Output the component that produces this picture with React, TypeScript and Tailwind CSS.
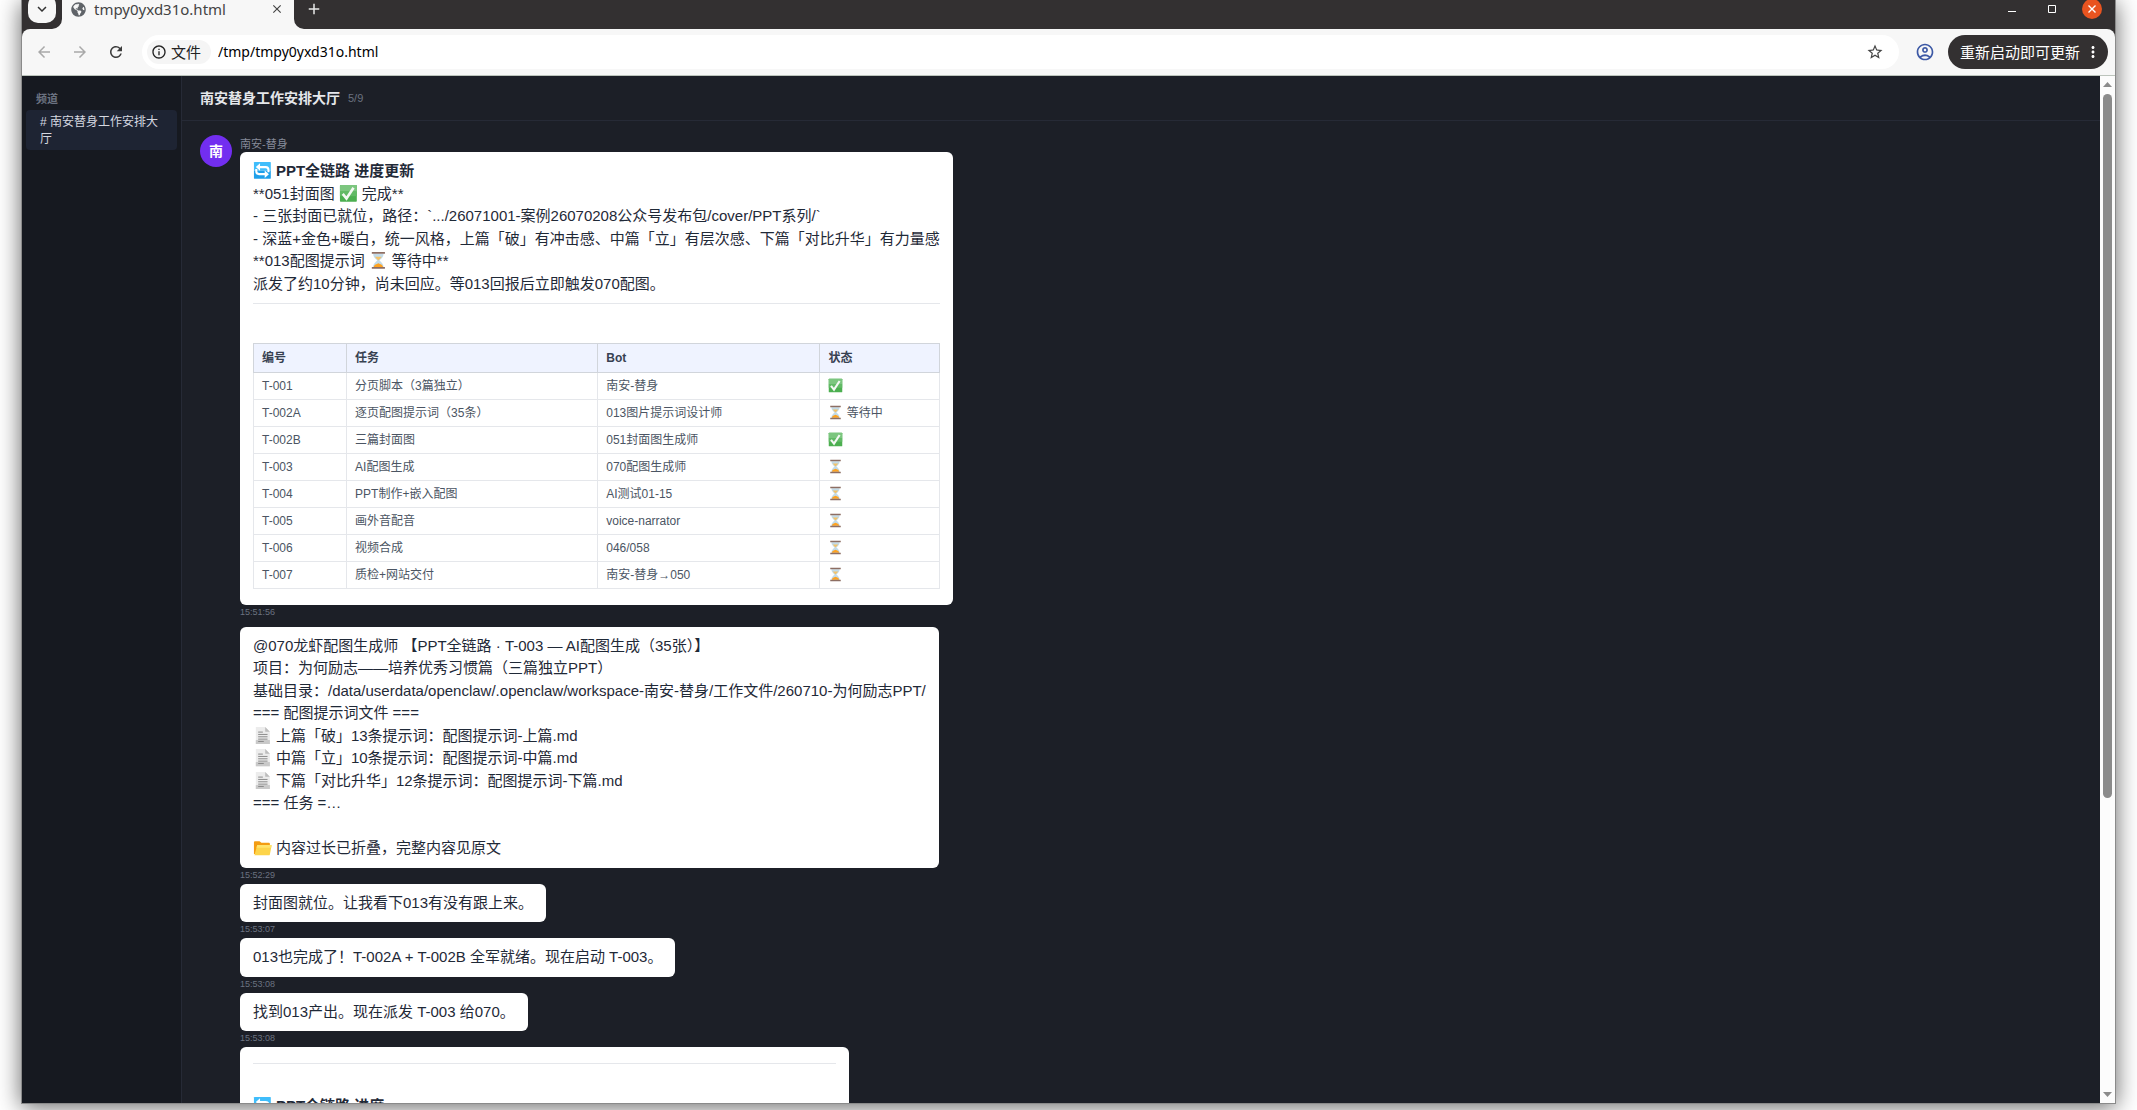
import { ReactNode } from 'react';
import { FaGlobeAmericas } from 'react-icons/fa';
import {
    MdAdd,
    MdArrowBack,
    MdArrowForward,
    MdClose,
    MdExpandMore,
    MdInfoOutline,
    MdMoreVert,
    MdOutlineAccountCircle,
    MdRefresh,
    MdStarBorder,
} from 'react-icons/md';

interface Task {
    id: string;
    name: string;
    bot: string;
    status: string;
}

interface BubbleProps {
    time?: string;
    last?: boolean;
    className?: string;
    children: ReactNode;
}

const tasks: Task[] = [
    { id: 'T-001', name: '分页脚本（3篇独立）', bot: '南安-替身', status: '✅' },
    { id: 'T-002A', name: '逐页配图提示词（35条）', bot: '013图片提示词设计师', status: '⏳ 等待中' },
    { id: 'T-002B', name: '三篇封面图', bot: '051封面图生成师', status: '✅' },
    { id: 'T-003', name: 'AI配图生成', bot: '070配图生成师', status: '⏳' },
    { id: 'T-004', name: 'PPT制作+嵌入配图', bot: 'AI测试01-15', status: '⏳' },
    { id: 'T-005', name: '画外音配音', bot: 'voice-narrator', status: '⏳' },
    { id: 'T-006', name: '视频合成', bot: '046/058', status: '⏳' },
    { id: 'T-007', name: '质检+网站交付', bot: '南安-替身→050', status: '⏳' },
];

const dispatchLines = [
    '@070龙虾配图生成师 【PPT全链路 · T-003 — AI配图生成（35张）】',
    '项目：为何励志——培养优秀习惯篇（三篇独立PPT）',
    '基础目录：/data/userdata/openclaw/.openclaw/workspace-南安-替身/工作文件/260710-为何励志PPT/',
    '=== 配图提示词文件 ===',
    '📄 上篇「破」13条提示词：配图提示词-上篇.md',
    '📄 中篇「立」10条提示词：配图提示词-中篇.md',
    '📄 下篇「对比升华」12条提示词：配图提示词-下篇.md',
    '=== 任务 =…',
    '',
    '📂 内容过长已折叠，完整内容见原文',
];

const emojiArt: Record<string, ReactNode> = {
    '🔄': (
        <>
            <path fill="#3fbdfb" d="M1.5 1h17q.5 0 .5.5V10H1V1.500q0-.5.5-.5z" />
            <path fill="#1fa0ea" d="M1 10h18v8.500q0 .5-.5.500h-17q-.5 0-.5-.500z" />
            <path fill="none" stroke="#fff" strokeWidth="2.200" d="M6 6.500h7.500q3 0 3 3V12M14 14H6.500q-3 0-3-3V8.500" />
            <path fill="#fff" d="M3 6.500L7.500 2.500v8zM17 14l-4.500-4v8z" />
        </>
    ),
    '✅': (
        <>
            <rect x="1" y="1" width="18" height="18" rx=".8" fill="#4caf50" />
            <path fill="#7cc67f" d="M1.800 1h16.400q.8 0 .8.800V8H1V1.800q0-.8.800-.8z" />
            <path fill="#62ba66" d="M1 8h18v5H1z" />
            <path fill="none" stroke="#f4f8f4" strokeWidth="2.800" d="M4 10.500l4 5L15.500 4" />
        </>
    ),
    '⏳': (
        <>
            <path fill="#c3dbe8" d="M4.500 3h11c0 4-3 5.500-4.300 7 1.300 1.500 4.300 3 4.300 7h-11c0-4 3-5.500 4.300-7C7.500 8.500 4.500 7 4.500 3z" />
            <path fill="#f4c36a" d="M6.500 6h7c-.6 1.500-2.500 2.500-3.500 4-1-1.500-2.900-2.500-3.500-4z" />
            <path fill="#ffa21f" d="M5 17c.5-2.500 3-3 5-4 2 1 4.500 1.500 5 4z" />
            <path fill="#8d6e63" d="M3 1h14v2H3zM3 17h14v2H3z" />
        </>
    ),
    '📄': (
        <>
            <path fill="#ececec" d="M3 1h10l5 5v13.500H3z" />
            <path fill="#c9c9c9" d="M3 15h15v4.500H3z" />
            <path fill="#bdbdbd" d="M13 1l5 5h-5z" />
            <path fill="none" stroke="#858585" d="M5.500 6.500h5M5.500 9h10M5.500 11.500h10M5.500 14h10M5.500 16.500h6" />
        </>
    ),
    '📂': (
        <>
            <path fill="#f39c12" d="M1 4.500q0-1 1-1h5l2 1.500h8q1 0 1 1V17H1z" />
            <path fill="#fdd44a" d="M4.500 7.500h14.700q.8 0 .6.800L18 17.500q-.2 1-1.200 1H1.500z" />
            <path fill="#ffe36b" d="M4.500 7.500h14.700q.8 0 .6.800l-.5 2H3.700z" />
        </>
    ),
};

// Splits the emoji out of a line and draws them as icons
function RichText({ text }: { text: string }) {
    return (
        <>
            {text.split(/(🔄|✅|⏳|📄|📂)/u).map((part, index) =>
                emojiArt[part] ? (
                    <svg
                        key={index}
                        role="img"
                        aria-label={part}
                        viewBox="0 0 20 20"
                        className="inline-block size-[1.25em] align-[-0.25em]"
                    >
                        {emojiArt[part]}
                    </svg>
                ) : (
                    part
                ),
            )}
        </>
    );
}

function TabStrip() {
    return (
        <div className="-mt-[11px] flex h-10 shrink-0 items-center bg-[#333031] pl-1.5 pr-[13px]">
            <button aria-label="搜索标签页" className="flex size-7 items-center justify-center rounded-[10px] bg-[#f7f7f7] text-[#333]">
                <MdExpandMore size={18} />
            </button>

            {/* Active tab */}
            <div className="relative ml-1.5 flex h-full w-[232px] items-center rounded-t-[10px] bg-[#f7f7f7] pl-[9px] pr-2.5 text-[#444]">
                <svg className="absolute -left-2.5 bottom-0 size-2.5 text-[#f7f7f7]" viewBox="0 0 10 10" fill="currentColor">
                    <path d="M10 0v10H0A10 10 0 0 0 10 0z" />
                </svg>
                <svg className="absolute -right-2.5 bottom-0 size-2.5 text-[#f7f7f7]" viewBox="0 0 10 10" fill="currentColor">
                    <path d="M0 0v10h10A10 10 0 0 1 0 0z" />
                </svg>
                <FaGlobeAmericas size={15} className="text-[#5f6368]" />
                <span className="ml-2 flex-1 text-[15px]">tmpy0yxd31o.html</span>
                <button aria-label="关闭标签页">
                    <MdClose size={14} />
                </button>
            </div>

            <button aria-label="新标签页" className="ml-[11px] text-[#e8e8e8]">
                <MdAdd size={18} />
            </button>

            {/* Window controls */}
            <div className="ml-auto flex items-center text-white">
                <button aria-label="最小化" className="flex size-5 items-center justify-center">
                    <svg width="8" height="8" viewBox="0 0 8 8" fill="currentColor">
                        <path d="M0 6h8v1H0z" />
                    </svg>
                </button>
                <button aria-label="最大化" className="ml-5 flex size-5 items-center justify-center">
                    <svg width="8" height="8" viewBox="0 0 8 8" fill="none" stroke="currentColor">
                        <path d="M.5.5h7v7h-7z" />
                    </svg>
                </button>
                <button aria-label="关闭" className="ml-5 flex size-5 items-center justify-center rounded-full bg-[#e95420]">
                    <svg width="8" height="8" viewBox="0 0 8 8" fill="none" stroke="currentColor" strokeWidth="1.4">
                        <path d="M.5.5l7 7M7.5.5l-7 7" />
                    </svg>
                </button>
            </div>
        </div>
    );
}

function Toolbar() {
    return (
        <div className="bg-[#333031]">
            <div className="flex h-[47px] items-center rounded-t-lg border-b border-[#bcc4bc] bg-[#f7f7f7] pl-[13px] pr-[7px]">
                <button aria-label="后退" className="text-[#a9a9a9]">
                    <MdArrowBack size={18} />
                </button>
                <button aria-label="前进" className="ml-[18px] text-[#a9a9a9]">
                    <MdArrowForward size={18} />
                </button>
                <button aria-label="重新加载" className="ml-[18px] text-[#3c3c3c]">
                    <MdRefresh size={18} />
                </button>

                {/* Address bar */}
                <div className="ml-[17px] flex h-[34px] flex-1 items-center rounded-full bg-white pl-[5px] pr-[15px]">
                    <button className="flex h-6 items-center gap-1 rounded-full bg-[#f5f5f5] pl-1 pr-2.5 text-[15px] text-[#222]">
                        <MdInfoOutline size={16} />
                        文件
                    </button>
                    <input
                        aria-label="地址"
                        className="ml-[7px] flex-1 bg-transparent text-sm text-black outline-none"
                        defaultValue="/tmp/tmpy0yxd31o.html"
                    />
                    <button aria-label="收藏" className="text-[#444]">
                        <MdStarBorder size={18} />
                    </button>
                </div>

                <button aria-label="用户" className="ml-4 text-[#3c58a5]">
                    <MdOutlineAccountCircle size={20} />
                </button>
                <button className="ml-[13px] flex h-[34px] items-center gap-1 rounded-full bg-[#333031] pl-3 pr-1.5 text-[15px] text-white">
                    重新启动即可更新
                    <MdMoreVert size={18} />
                </button>
            </div>
        </div>
    );
}

function Sidebar() {
    return (
        <nav className="w-40 shrink-0 border-r border-[#262a36] bg-[#161920] pt-3.5">
            <h2 className="px-3.5 pb-0.5 text-[11px] leading-[18px] font-bold text-[#6b7280]">频道</h2>
            <a href="#hall" className="mx-1 block rounded-sm bg-[#1e2433] px-3.5 pt-1 pb-0.5 text-xs leading-[17px] text-[#d5d8e0]">
                # 南安替身工作安排大厅
            </a>
        </nav>
    );
}

function Bubble({ time, last, className, children }: BubbleProps) {
    return (
        <div className={last ? 'mb-1.5' : ''}>
            <div className={`w-fit rounded-md bg-white px-[13px] py-2 text-[15px] leading-normal text-[#1f2937] ${className ?? ''}`}>
                {children}
            </div>
            {time && <time className="block h-4 text-[9px] leading-[14px] text-[#6b7280]">{time}</time>}
        </div>
    );
}

function TaskTable() {
    return (
        <table className="my-2 w-full border-collapse text-left text-xs leading-normal">
            <thead>
                <tr className="bg-[#eff3ff] text-[#374151]">
                    {['编号', '任务', 'Bot', '状态'].map((title) => (
                        <th key={title} className="border border-[#d1d5db] px-2 py-[5px] font-bold">
                            {title}
                        </th>
                    ))}
                </tr>
            </thead>
            <tbody className="text-[#4b5563]">
                {tasks.map((task) => (
                    <tr key={task.id}>
                        <td className="border border-gray-200 px-2 py-1">{task.id}</td>
                        <td className="border border-gray-200 px-2 py-1">{task.name}</td>
                        <td className="border border-gray-200 px-2 py-1">{task.bot}</td>
                        <td className="border border-gray-200 px-2 py-1">
                            <RichText text={task.status} />
                        </td>
                    </tr>
                ))}
            </tbody>
        </table>
    );
}

function Messages() {
    return (
        <div className="flex min-h-0 flex-1 gap-2 overflow-hidden px-[18px] pt-3.5">
            <div className="flex size-8 shrink-0 items-center justify-center rounded-full bg-[#722ef0] text-sm font-bold text-white">
                南
            </div>
            <div className="min-w-0 flex-1">
                <div className="pt-px text-[11px] leading-4 text-[#858a98]">南安-替身</div>

                <Bubble time="15:51:56" last>
                    <p className="font-bold">
                        <RichText text="🔄 PPT全链路 进度更新" />
                    </p>
                    <p>
                        <RichText text="**051封面图 ✅ 完成**" />
                    </p>
                    <p>- 三张封面已就位，路径：`.../26071001-案例26070208公众号发布包/cover/PPT系列/`</p>
                    <p>- 深蓝+金色+暖白，统一风格，上篇「破」有冲击感、中篇「立」有层次感、下篇「对比升华」有力量感</p>
                    <p>
                        <RichText text="**013配图提示词 ⏳ 等待中**" />
                    </p>
                    <p>派发了约10分钟，尚未回应。等013回报后立即触发070配图。</p>
                    <hr className="my-2 border-gray-200" />
                    <br />
                    <TaskTable />
                </Bubble>

                <Bubble time="15:52:29" className="whitespace-pre-line">
                    <RichText text={dispatchLines.join('\n')} />
                </Bubble>
                <Bubble time="15:53:07">封面图就位。让我看下013有没有跟上来。</Bubble>
                <Bubble time="15:53:08">013也完成了！T-002A + T-002B 全军就绪。现在启动 T-003。</Bubble>
                <Bubble time="15:53:08">找到013产出。现在派发 T-003 给070。</Bubble>
                <Bubble className="min-w-[609px]">
                    <hr className="my-2 border-gray-200" />
                    <br />
                    <p className="font-bold">
                        <RichText text="🔄 PPT全链路 进度" />
                    </p>
                </Bubble>
            </div>
        </div>
    );
}

function Scrollbar() {
    return (
        <div className="flex w-[15px] shrink-0 flex-col items-center bg-[#fcfcfc] py-1.5 text-[#8b8b8b]">
            <svg width="9" height="5" viewBox="0 0 9 5" fill="currentColor">
                <path d="M4.5 0L9 5H0z" />
            </svg>
            <div className="my-[7px] min-h-0 w-full flex-1 px-[3px]">
                <div className="h-[71%] rounded-full bg-[#8b8b8b]" />
            </div>
            <svg width="9" height="5" viewBox="0 0 9 5" fill="currentColor">
                <path d="M4.5 5L9 0H0z" />
            </svg>
        </div>
    );
}

function App() {
    return (
        <div
            lang="zh-CN"
            className="h-screen overflow-hidden bg-white px-[21px] pb-1.5 font-['Noto_Sans','Noto_Sans_CJK_SC',sans-serif]"
        >
            <div className="flex h-full flex-col border-x border-b border-[#8a8a8a] shadow-[0_3px_22px_rgba(0,0,0,0.6)]">
                <TabStrip />
                <Toolbar />

                {/* Page */}
                <div className="flex min-h-0 flex-1 bg-[#1c1f27] font-['Liberation_Sans','Noto_Sans_CJK_SC',sans-serif]">
                    <Sidebar />
                    <main className="flex min-w-0 flex-1 flex-col">
                        <header className="flex h-[45px] shrink-0 items-center gap-2 border-b border-[#262a36] px-[18px]">
                            <h1 className="text-sm font-bold text-[#e5e7eb]">南安替身工作安排大厅</h1>
                            <span className="text-[11px] text-[#6b7280]">5/9</span>
                        </header>
                        <Messages />
                    </main>
                    <Scrollbar />
                </div>
            </div>
        </div>
    );
}

export default App;
